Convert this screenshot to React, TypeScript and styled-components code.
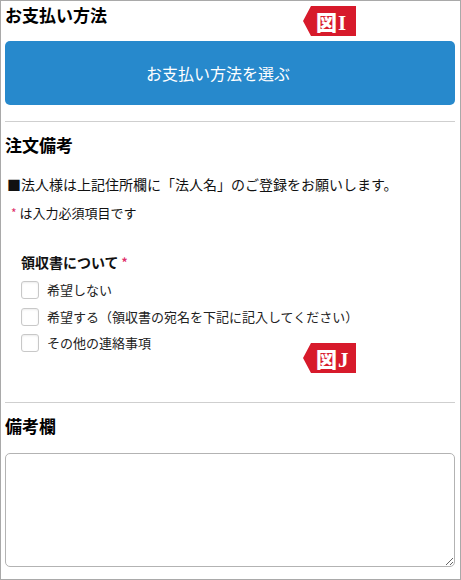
import styled, { createGlobalStyle } from "styled-components";

const GlobalStyle = createGlobalStyle`
  html, body {
    margin: 0;
    padding: 0;
    background: #fff;
  }
  body {
    font-family: "Noto Sans CJK JP", "Noto Sans", sans-serif;
    color: #111;
  }
`;

const receiptOptions = [
  "希望しない",
  "希望する（領収書の宛名を下記に記入してください）",
  "その他の連絡事項",
];

function App() {
  return (
    <>
      <GlobalStyle />
      <Page>
        <Heading>お支払い方法</Heading>
        <PayButton type="button">お支払い方法を選ぶ</PayButton>
        <Divider />

        <Heading>注文備考</Heading>
        <Notice>■法人様は上記住所欄に「法人名」のご登録をお願いします。</Notice>
        <Required>
          <Star>*</Star> は入力必須項目です
        </Required>

        <Fieldset>
          <Legend>
            領収書について<Star>*</Star>
          </Legend>
          <Options>
            {receiptOptions.map((label) => (
              <Option key={label}>
                <Check type="checkbox" />
                <span>{label}</span>
              </Option>
            ))}
          </Options>
        </Fieldset>
        <Divider />

        <Heading>備考欄</Heading>
        <Memo />

        <Badge $top={5}>図I</Badge>
        <Badge $top={342}>図J</Badge>
      </Page>
    </>
  );
}

export default App;

const Page = styled.div`
  position: relative;
  box-sizing: border-box;
  width: 461px;
  height: 580px;
  border: 1px solid #a9a9a9;
  padding: 2px 5px 0 4px;
  display: flex;
  flex-direction: column;
  overflow: hidden;
`;

const Heading = styled.h2`
  margin: 0;
  font-size: 17px;
  line-height: 24px;
  font-weight: 700;
  color: #000;
`;

const PayButton = styled.button`
  margin-top: 14px;
  height: 64px;
  width: 100%;
  padding: 0 24px 0 0;
  border: none;
  border-radius: 5px;
  background: #2789cc;
  color: #fff;
  font-family: inherit;
  font-size: 16px;
  cursor: pointer;
`;

const Divider = styled.hr`
  margin: 16px 0 11px;
  border: none;
  border-top: 1px solid #cfcfcf;
  height: 0;
`;

const Notice = styled.p`
  margin: 17px 0 0 2px;
  font-size: 14px;
  line-height: 20px;
  color: #111;
`;

const Required = styled.p`
  margin: 9px 0 0 3px;
  font-size: 13px;
  line-height: 20px;
`;

const Star = styled.span`
  color: #e0306a;
  font-size: 12px;
  margin-left: 3px;
  vertical-align: top;
`;

const Fieldset = styled.div`
  padding: 29px 0 0 16px;
  display: flex;
  flex-direction: column;
`;

const Legend = styled.div`
  font-size: 14px;
  line-height: 20px;
  font-weight: 700;
  color: #111;
`;

const Options = styled.div`
  display: flex;
  flex-direction: column;
  gap: 8.5px;
  margin-top: 9px;
  padding-bottom: 34px;
`;

const Option = styled.label`
  display: flex;
  align-items: center;
  gap: 8px;
  font-size: 13px;
  line-height: 18px;
  color: #222;
`;

const Check = styled.input`
  appearance: none;
  margin: 0;
  width: 18px;
  height: 18px;
  border: 1px solid #c8c8c8;
  border-radius: 3px;
  box-shadow: inset 0 1px 2px rgba(0, 0, 0, 0.08);
  background: #fff;
`;

const Memo = styled.textarea`
  margin-top: 15px;
  box-sizing: border-box;
  width: 100%;
  height: 114px;
  border: 1px solid #b3b3b3;
  border-radius: 5px;
  resize: vertical;
  font-family: inherit;
`;

const Badge = styled.div<{ $top: number }>`
  position: absolute;
  top: ${(p) => p.$top}px;
  left: 302px;
  width: 53px;
  height: 30px;
  box-sizing: border-box;
  padding-left: 13px;
  display: flex;
  align-items: center;
  background: #d71a2b;
  clip-path: polygon(0 50%, 8px 0, 100% 0, 100% 100%, 8px 100%);
  color: #fff;
  font-family: "Liberation Serif", "Noto Sans CJK JP", serif;
  font-size: 21px;
  font-weight: 900;
  letter-spacing: 1px;
`;
